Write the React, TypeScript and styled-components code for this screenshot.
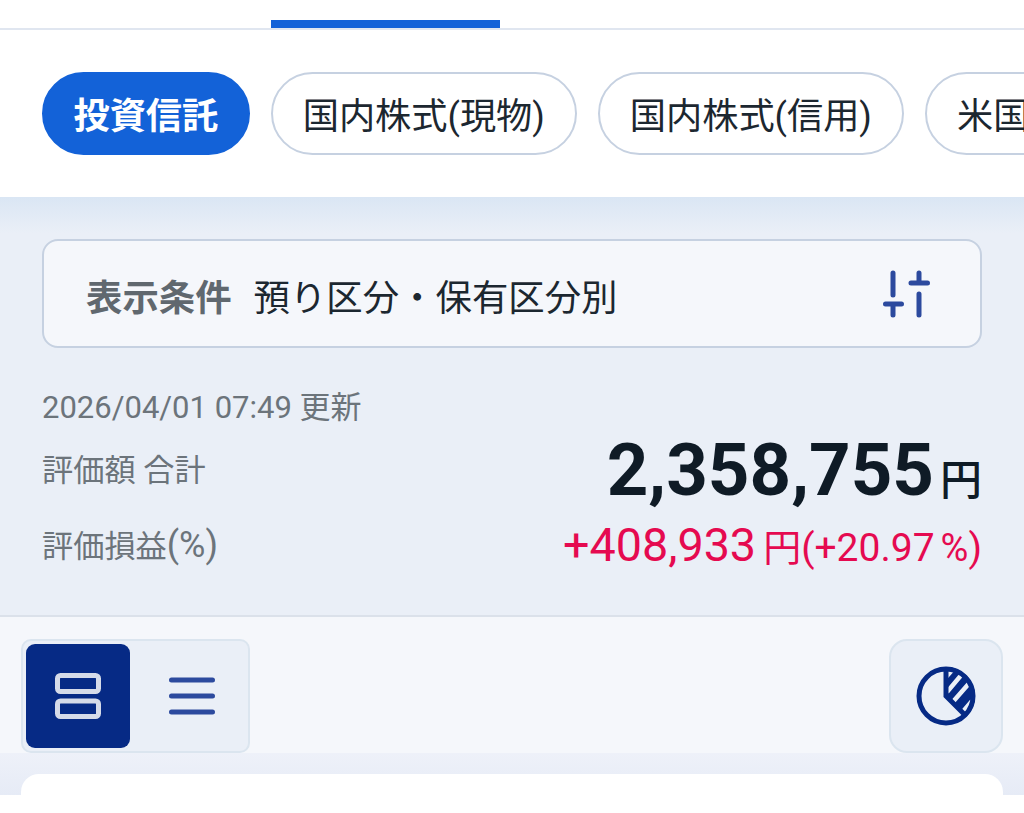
import React from 'react';
import styled, { createGlobalStyle } from 'styled-components';

const CHIPS = ['投資信託', '国内株式(現物)', '国内株式(信用)', '米国株式(現物)'];

const GlobalStyle = createGlobalStyle`
  html, body {
    margin: 0;
    padding: 0;
    background: #fff;
    overflow: hidden;
  }
  body {
    font-family: Roboto, "Noto Sans CJK JP", sans-serif;
  }
`;

const App = () => {
  return (
    <>
      <GlobalStyle />
      <Page>
        <TabBar>
          <TabIndicator />
        </TabBar>
        <ChipRow>
          {CHIPS.map((chip, index) => (
            <Chip key={chip} active={index === 0}>{chip}</Chip>
          ))}
        </ChipRow>
        <Summary>
          <FilterBox>
            <FilterLabel>表示条件</FilterLabel>
            <FilterValue>預り区分・保有区分別</FilterValue>
            <SliderIcon />
          </FilterBox>
          <UpdatedAt>2026/04/01 07:49 更新</UpdatedAt>
          <TotalRow>
            <TotalLabel>評価額 合計</TotalLabel>
            <TotalValue>2,358,755<TotalUnit>円</TotalUnit></TotalValue>
          </TotalRow>
          <ProfitRow>
            <ProfitLabel>評価損益<LabelUnit>(%)</LabelUnit></ProfitLabel>
            <ProfitValue>
              <ProfitAmount>+408,933</ProfitAmount>
              <ProfitUnit>円</ProfitUnit>
              <ProfitRate>(+20.97</ProfitRate>
              <ProfitPercent>%</ProfitPercent>
              <ProfitRate>)</ProfitRate>
            </ProfitValue>
          </ProfitRow>
        </Summary>
        <Toolbar>
          <ViewSwitch>
            <ViewButton active><CardsIcon /></ViewButton>
            <ViewButton><ListIcon /></ViewButton>
          </ViewSwitch>
          <ChartButton><PieIcon /></ChartButton>
        </Toolbar>
        <CardArea>
          <Card />
        </CardArea>
      </Page>
    </>
  );
};

const SliderIcon = () => (
  <FilterIconSvg viewBox="0 0 48 48" fill="none" stroke="#2c4a9e" strokeWidth="5" strokeLinecap="round">
    <path d="M11 3v22M3.5 34h16M11 34v11M37 3v10M29 13h16.5M37 24v21" />
  </FilterIconSvg>
);

const CardsIcon = () => (
  <svg width="46" height="46" viewBox="0 0 46 46" fill="none" stroke="#d5dbe9" strokeWidth="5">
    <rect x="2.5" y="2.5" width="41" height="16" rx="3" />
    <rect x="2.5" y="28" width="41" height="15.5" rx="3" />
  </svg>
);

const ListIcon = () => (
  <svg width="46" height="46" viewBox="0 0 46 46" fill="none" stroke="#2c4a9e" strokeWidth="5" strokeLinecap="round">
    <path d="M2.5 7h41M2.5 23h41M2.5 39h41" />
  </svg>
);

const PieIcon = () => (
  <svg width="60" height="60" viewBox="0 0 60 60" fill="none">
    <defs>
      <clipPath id="slice">
        <path d="M30 30V1a29 29 0 0 1 20.5 49.5z" />
      </clipPath>
    </defs>
    <g clipPath="url(#slice)">
      <rect width="60" height="60" fill="#062a85" />
      <path d="M30 11L38 2M31 26L47 7M35 38L56 14M44 49L56 35" stroke="#eaeff7" strokeWidth="4.5" />
    </g>
    <circle cx="30" cy="30" r="27" stroke="#062a85" strokeWidth="5" />
    <path d="M30 3v27l20 20" stroke="#062a85" strokeWidth="5" />
  </svg>
);

const Page = styled.div`
  width: 1024px;
  height: 813px;
  background: #fff;
  overflow: hidden;
`;

const TabBar = styled.div`
  box-sizing: border-box;
  height: 30px;
  padding-left: 271px;
  border-bottom: 2px solid #e0e6f0;
`;

const TabIndicator = styled.div`
  width: 229px;
  height: 8px;
  margin-top: 20px;
  background: #1362d8;
  float: left;
`;

const ChipRow = styled.div`
  box-sizing: border-box;
  display: flex;
  align-items: flex-start;
  gap: 21px;
  height: 167px;
  padding: 42px 0 0 42px;
  background: #fff;
  overflow: hidden;
`;

const Chip = styled.div<{ active?: boolean }>`
  box-sizing: border-box;
  flex: none;
  height: 83px;
  padding: 0 ${({ active }) => (active ? 29.5 : 30)}px;
  border-radius: 42px;
  border: 2.5px solid ${({ active }) => (active ? '#1362d8' : '#c6d1e1')};
  background: ${({ active }) => (active ? '#1362d8' : '#fff')};
  color: ${({ active }) => (active ? '#fff' : '#1c2730')};
  font-size: 36.2px;
  font-weight: ${({ active }) => (active ? 700 : 400)};
  line-height: 86px;
  white-space: nowrap;
`;

const Summary = styled.div`
  box-sizing: border-box;
  height: 420px;
  padding: 42px 42px 0;
  background: linear-gradient(#dae6f4 0, #eaeff7 36px);
  border-bottom: 2px solid #dbe1ea;
`;

const FilterBox = styled.div`
  box-sizing: border-box;
  display: flex;
  align-items: center;
  height: 109px;
  padding: 2px 50px 0 42px;
  border: 2.5px solid #c6d1e1;
  border-radius: 16px;
  background: #f5f7fb;
`;

const FilterLabel = styled.span`
  margin-right: 22px;
  font-size: 36.4px;
  font-weight: 700;
  color: #60686f;
`;

const FilterValue = styled.span`
  flex: 1;
  font-size: 36.4px;
  color: #1c2730;
`;

const FilterIconSvg = styled.svg`
  width: 48px;
  height: 48px;
  margin-top: -2px;
`;

const UpdatedAt = styled.div`
  margin-top: 40px;
  height: 40px;
  font-size: 31px;
  line-height: 40px;
  color: #6c747b;
`;

const TotalRow = styled.div`
  display: flex;
  justify-content: space-between;
  align-items: flex-start;
  height: 87px;
  margin-top: 5px;
`;

const ProfitRow = styled.div`
  display: flex;
  justify-content: space-between;
  align-items: center;
  height: 48px;
`;

const TotalLabel = styled.span`
  font-size: 31.2px;
  line-height: 76px;
  color: #6c747b;
`;

const ProfitLabel = styled(TotalLabel)`
  padding-top: 4px;
  line-height: 44px;
`;

const LabelUnit = styled.span`
  font-size: 36px;
`;

const TotalValue = styled.span`
  font-size: 72.6px;
  font-weight: 700;
  line-height: 76px;
  color: #0f1b26;
`;

const TotalUnit = styled.span`
  margin-left: 6px;
  font-size: 42px;
  font-weight: 500;
`;

const ProfitValue = styled.span`
  color: #e50a50;
  white-space: nowrap;
`;

const ProfitAmount = styled.span`
  font-size: 46.7px;
`;

const ProfitUnit = styled.span`
  margin-left: 7px;
  font-size: 38px;
`;

const ProfitRate = styled.span`
  font-size: 39px;
`;

const ProfitPercent = styled.span`
  margin-left: 6px;
  font-size: 38px;
`;

const Toolbar = styled.div`
  box-sizing: border-box;
  display: flex;
  justify-content: space-between;
  align-items: flex-end;
  height: 136px;
  padding: 0 21px;
  background: #f5f7fb;
`;

const ViewSwitch = styled.div`
  box-sizing: border-box;
  display: flex;
  gap: 10px;
  width: 229px;
  height: 114px;
  padding: 3px;
  border: 2px solid #dbe5ef;
  border-radius: 10px;
  background: #eaeff7;
`;

const ViewButton = styled.div<{ active?: boolean }>`
  display: flex;
  align-items: center;
  justify-content: center;
  flex: none;
  width: 104px;
  height: 104px;
  border-radius: 9px;
  background: ${({ active }) => (active ? '#062a85' : 'transparent')};
`;

const ChartButton = styled.div`
  box-sizing: border-box;
  display: flex;
  align-items: center;
  justify-content: center;
  width: 114px;
  height: 114px;
  border: 2.5px solid #dbe5ef;
  border-radius: 18px;
  background: #eaeff7;
`;

const CardArea = styled.div`
  box-sizing: border-box;
  height: 42px;
  padding: 21px 21px 0;
  background: linear-gradient(#eef1f9, #e6ebf6);
`;

const Card = styled.div`
  height: 21px;
  border-radius: 18px 18px 0 0;
  background: #fff;
`;

export default App;
